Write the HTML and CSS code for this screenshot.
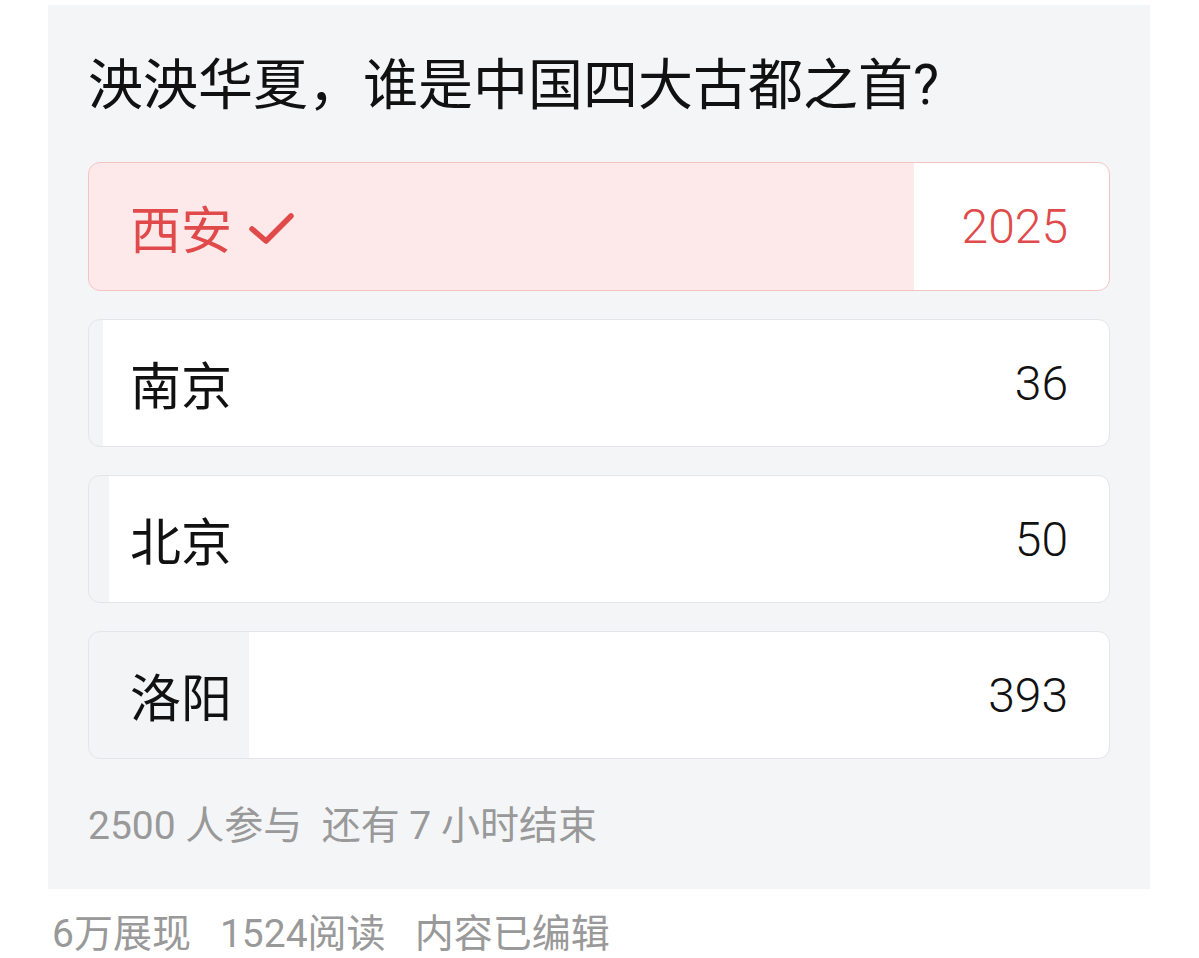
FILE: index.html
```html
<!DOCTYPE html>
<html lang="zh-CN">
<head>
  <meta charset="UTF-8" />
  <meta name="viewport" content="width=device-width, initial-scale=1.0"/>
  <title>投票</title>
  <link rel="stylesheet" href="styles.css">
</head>
<body>
  <div class="poll">
    <h1 class="question">泱泱华夏，谁是中国四大古都之首?</h1>
    <div class="options">
      <div class="option voted" style="--pct: 80.9%">
        <span class="label">西安
          <svg class="check" width="46" height="36" viewBox="0 0 46 36"><path d="M4 19 L18 31 L43 6" fill="none" stroke="currentColor" stroke-width="5.5" stroke-linecap="round" stroke-linejoin="round"/></svg>
        </span>
        <span class="count">2025</span>
      </div>
      <div class="option" style="--pct: 1.4%">
        <span class="label">南京</span>
        <span class="count">36</span>
      </div>
      <div class="option" style="--pct: 2%">
        <span class="label">北京</span>
        <span class="count">50</span>
      </div>
      <div class="option" style="--pct: 15.7%">
        <span class="label">洛阳</span>
        <span class="count">393</span>
      </div>
    </div>
    <div class="poll-info">2500 人参与&nbsp;&nbsp;还有 7 小时结束</div>
  </div>
  <div class="meta">6万展现&nbsp;&nbsp;&nbsp;1524阅读&nbsp;&nbsp;&nbsp;内容已编辑</div>
</body>
</html>
```

FILE: styles.css
```css
body {
  margin: 0;
  background: #fff;
  font-family: Roboto, "Noto Sans CJK SC", sans-serif;
  color: #111;
}
.poll {
  width: 1102px;
  box-sizing: border-box;
  margin: 5px 0 0 48px;
  padding: 48px 40px 38px;
  background: #f4f5f7;
}
.question {
  margin: 0;
  font-size: 55px;
  font-weight: 400;
  line-height: 64px;
}
.options {
  display: flex;
  flex-direction: column;
  gap: 28px;
  margin-top: 45px;
}
.option {
  height: 128px;
  box-sizing: border-box;
  display: flex;
  align-items: center;
  justify-content: space-between;
  padding: 0 41px 0 41px;
  border: 1px solid #e4e5e8;
  border-radius: 12px;
  background: linear-gradient(to right, #f3f4f6 var(--pct), #fff var(--pct));
}
.option.voted {
  height: 129px;
  border-color: #f4c4c4;
  background: linear-gradient(to right, #fde9e9 var(--pct), #fff var(--pct));
  color: #e04a4a;
}
.label {
  display: flex;
  align-items: center;
  gap: 16px;
  font-size: 51px;
}
.check {
  margin-top: 2px;
}
.count {
  font-size: 48px;
  font-weight: 300;
}
.poll-info {
  margin-top: 42px;
  font-size: 39px;
  line-height: 50px;
  color: #999;
}
.meta {
  margin: 20px 0 0 52px;
  font-size: 39px;
  line-height: 50px;
  color: #999;
}
```
